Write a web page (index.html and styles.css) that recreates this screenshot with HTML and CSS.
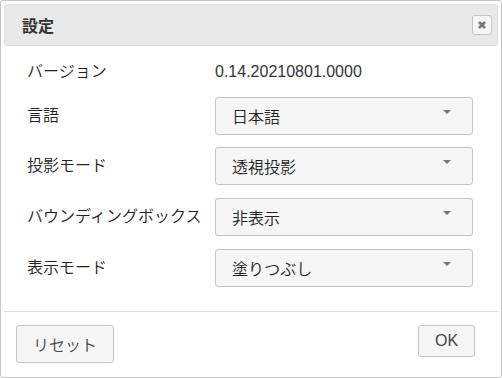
FILE: index.html
```html
<!DOCTYPE html>
<html lang="ja">
<head>
    <meta charset="UTF-8">
    <meta name="viewport" content="width=device-width, initial-scale=1.0">
    <title>設定</title>
    <link rel="stylesheet" href="styles.css">
</head>
<body>
    <div class="dialog">
        <div class="titlebar">
            <span class="title">設定</span>
            <button class="close-button" title="閉じる">
                <svg width="10" height="10" viewBox="0 0 10 10">
                    <path d="M2 2 L8 8 M8 2 L2 8" stroke="#777" stroke-width="2.6" stroke-linecap="butt"/>
                </svg>
            </button>
        </div>

        <div class="content">
            <div class="label">バージョン</div>
            <div class="value">0.14.20210801.0000</div>

            <div class="label">言語</div>
            <div class="select"><span>日本語</span><span class="arrow"></span></div>

            <div class="label">投影モード</div>
            <div class="select"><span>透視投影</span><span class="arrow"></span></div>

            <div class="label">バウンディングボックス</div>
            <div class="select"><span>非表示</span><span class="arrow"></span></div>

            <div class="label">表示モード</div>
            <div class="select"><span>塗りつぶし</span><span class="arrow"></span></div>
        </div>

        <div class="footer">
            <button class="button reset">リセット</button>
            <button class="button ok">OK</button>
        </div>
    </div>
</body>
</html>
```

FILE: styles.css
```css
* {
    margin: 0;
    padding: 0;
    box-sizing: border-box;
}

body {
    font-family: "Liberation Sans", "Noto Sans CJK JP", sans-serif;
    font-size: 16px;
    color: #333;
    background: #fff;
}

.dialog {
    width: 502px;
    height: 378px;
    border: 1px solid #c5c5c5;
    border-radius: 3px;
    padding: 3px 3px 0;
    background: #fff;
    display: flex;
    flex-direction: column;
}

.titlebar {
    height: 42px;
    border: 1px solid #dddddd;
    border-radius: 3px;
    background: #e9e9e9;
    display: flex;
    align-items: center;
    justify-content: space-between;
    padding: 0 5px 0 17px;
}

.title {
    font-weight: bold;
    color: #333;
}

.close-button {
    width: 20px;
    height: 20px;
    border: 1px solid #c5c5c5;
    border-radius: 3px;
    background: #f6f6f6;
    display: flex;
    align-items: center;
    justify-content: center;
    cursor: pointer;
}

.content {
    flex: 1;
    display: grid;
    grid-template-columns: 188px 258px;
    grid-template-rows: 24px repeat(4, 38px);
    row-gap: 12.7px;
    align-items: center;
    align-content: start;
    padding: 14px 0 0 23px;
}

.label,
.value {
    line-height: 24px;
    white-space: nowrap;
}

.label,
.select span,
.reset {
    font-weight: 350;
    color: #222;
}

.select {
    height: 38px;
    border: 1px solid #c5c5c5;
    border-radius: 3px;
    background: #f6f6f6;
    display: flex;
    align-items: center;
    justify-content: space-between;
    padding: 0 21px 0 16px;
    color: #333;
    cursor: pointer;
}

.arrow {
    width: 0;
    height: 0;
    border-left: 4px solid transparent;
    border-right: 4px solid transparent;
    border-top: 4px solid #777;
    margin-top: -8px;
}

.footer {
    height: 66px;
    border-top: 1px solid #dddddd;
    display: flex;
    justify-content: space-between;
    align-items: flex-start;
    padding: 13px 23px 0 12px;
}

.button {
    font-family: inherit;
    font-size: 16px;
    color: #454545;
    background: #f6f6f6;
    border: 1px solid #c5c5c5;
    border-radius: 3px;
    cursor: pointer;
}

.reset {
    width: 98px;
    height: 38px;
}

.ok {
    width: 57px;
    height: 32px;
}
```
